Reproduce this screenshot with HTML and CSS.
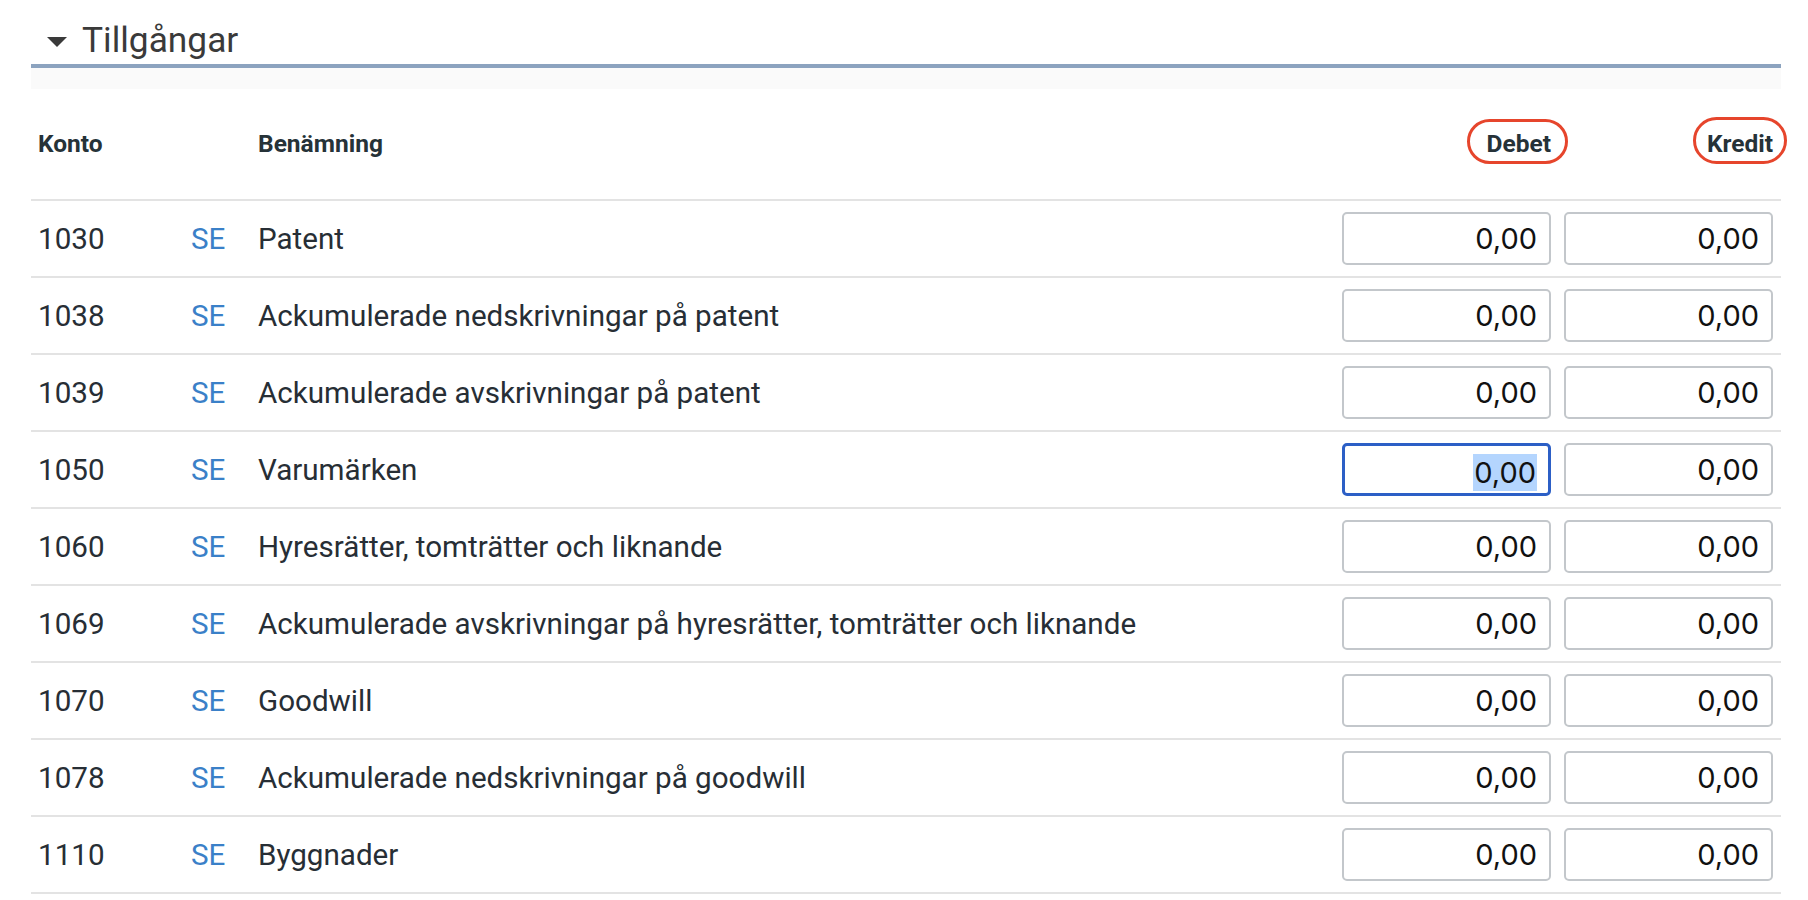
FILE: index.html
```html
<!DOCTYPE html>
<html lang="sv">
<head>
<meta charset="utf-8">
<title>Tillgångar</title>
<link rel="stylesheet" href="styles.css">
</head>
<body>
<section class="section">
  <h2 class="section-title">
    <svg class="caret" width="20" height="10" viewBox="0 0 20 10" aria-hidden="true"><path d="M0 0 H20 L10 10 Z" fill="#3a3a3a"/></svg>
    <span>Tillgångar</span>
  </h2>
  <div class="band"></div>
  <div class="table">
    <div class="row head">
      <div class="cell konto">Konto</div>
      <div class="cell se"></div>
      <div class="cell name">Benämning</div>
      <div class="cell num"><span class="marked marked-debet">Debet</span></div>
      <div class="cell num kredit"><span class="marked marked-kredit">Kredit</span></div>
    </div>

    <div class="row">
      <div class="cell konto">1030</div>
      <div class="cell se">SE</div>
      <div class="cell name">Patent</div>
      <div class="cell num"><input class="amount" value="0,00"></div>
      <div class="cell num kredit"><input class="amount" value="0,00"></div>
    </div>
    <div class="row">
      <div class="cell konto">1038</div>
      <div class="cell se">SE</div>
      <div class="cell name">Ackumulerade nedskrivningar på patent</div>
      <div class="cell num"><input class="amount" value="0,00"></div>
      <div class="cell num kredit"><input class="amount" value="0,00"></div>
    </div>
    <div class="row">
      <div class="cell konto">1039</div>
      <div class="cell se">SE</div>
      <div class="cell name">Ackumulerade avskrivningar på patent</div>
      <div class="cell num"><input class="amount" value="0,00"></div>
      <div class="cell num kredit"><input class="amount" value="0,00"></div>
    </div>
    <div class="row">
      <div class="cell konto">1050</div>
      <div class="cell se">SE</div>
      <div class="cell name">Varumärken</div>
      <div class="cell num"><div class="amount focused"><span class="selected">0,00</span></div></div>
      <div class="cell num kredit"><input class="amount" value="0,00"></div>
    </div>
    <div class="row">
      <div class="cell konto">1060</div>
      <div class="cell se">SE</div>
      <div class="cell name">Hyresrätter, tomträtter och liknande</div>
      <div class="cell num"><input class="amount" value="0,00"></div>
      <div class="cell num kredit"><input class="amount" value="0,00"></div>
    </div>
    <div class="row">
      <div class="cell konto">1069</div>
      <div class="cell se">SE</div>
      <div class="cell name">Ackumulerade avskrivningar på hyresrätter, tomträtter och liknande</div>
      <div class="cell num"><input class="amount" value="0,00"></div>
      <div class="cell num kredit"><input class="amount" value="0,00"></div>
    </div>
    <div class="row">
      <div class="cell konto">1070</div>
      <div class="cell se">SE</div>
      <div class="cell name">Goodwill</div>
      <div class="cell num"><input class="amount" value="0,00"></div>
      <div class="cell num kredit"><input class="amount" value="0,00"></div>
    </div>
    <div class="row">
      <div class="cell konto">1078</div>
      <div class="cell se">SE</div>
      <div class="cell name">Ackumulerade nedskrivningar på goodwill</div>
      <div class="cell num"><input class="amount" value="0,00"></div>
      <div class="cell num kredit"><input class="amount" value="0,00"></div>
    </div>
    <div class="row">
      <div class="cell konto">1110</div>
      <div class="cell se">SE</div>
      <div class="cell name">Byggnader</div>
      <div class="cell num"><input class="amount" value="0,00"></div>
      <div class="cell num kredit"><input class="amount" value="0,00"></div>
    </div>
  </div>
</section>
</body>
</html>
```

FILE: styles.css
```css
* { box-sizing: border-box; }

html, body {
  margin: 0;
  padding: 0;
  background: #ffffff;
  font-family: Roboto, "Liberation Sans", sans-serif;
  color: #272e35;
}

.section {
  margin: 0 27px 0 31px;
}

.section-title {
  display: flex;
  align-items: center;
  margin: 0;
  padding: 19px 0 3px 16px;
  font-size: 35.3px;
  line-height: 42px;
  font-weight: 400;
  color: #3a3a3a;
  border-bottom: 4px solid #8ca3bf;
}

.caret {
  display: block;
  margin-right: 15px;
  margin-top: 3px;
}

.band {
  height: 21px;
  background: #fafafa;
}

.row {
  display: grid;
  grid-template-columns: 153px 67px 1fr 209px 222px;
  align-items: center;
  height: 77px;
  padding-right: 8px;
  border-bottom: 2px solid #e3e3e3;
  font-size: 29.6px;
}

.row.head {
  height: 112px;
  font-size: 24.5px;
  line-height: 28px;
  font-weight: 700;
  color: #263238;
}

.cell {
  padding-left: 7px;
  white-space: nowrap;
}

.cell.num {
  padding-left: 0;
  text-align: right;
}

.cell.kredit {
  padding-left: 13px;
}

.se {
  color: #3a80c8;
}

.marked {
  position: relative;
  display: inline-block;
}

.marked::after {
  content: "";
  position: absolute;
  border: 3px solid #e6452c;
  border-radius: 24px;
}

.marked-debet::after {
  top: -11px;
  bottom: -6px;
  left: -20px;
  right: -17px;
}

.marked-kredit::after {
  top: -13px;
  bottom: -6px;
  left: -14px;
  right: -14px;
}

.amount {
  display: block;
  width: 209px;
  height: 53px;
  margin: 0;
  padding: 0 12px 0 0;
  border: 2px solid #c3c7cb;
  border-radius: 5px;
  background: #ffffff;
  font-family: Inter, "Liberation Sans", sans-serif;
  font-size: 29px;
  color: #111111;
  text-align: right;
  outline: none;
}

.amount.focused {
  border: 3px solid #2c5fc6;
  padding-right: 11px;
  line-height: 47px;
}

.selected {
  display: inline-block;
  line-height: 37px;
  padding: 0 1px;
  background: #b4d5fe;
  vertical-align: middle;
}
```
